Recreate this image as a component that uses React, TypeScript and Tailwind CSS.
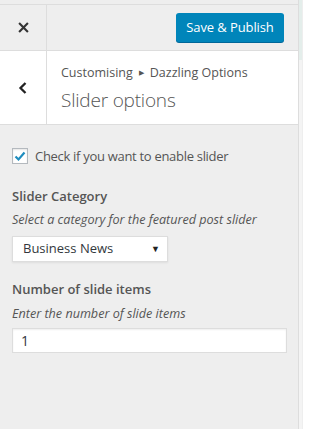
import React from 'react';

const font = { fontFamily: '"Open Sans", "Noto Sans", "Liberation Sans", sans-serif' };

export default function App() {
  return (
    <div className="flex h-[429px] w-[303px] bg-[#eee]" style={font}>
      {/* Sidebar */}
      <div className="flex w-[299px] flex-col border-r border-[#ddd] bg-[#eee]">
        {/* Top bar */}
        <div className="mt-[4px] flex h-[46px] border-t border-[#ddd]">
          <button className="flex w-[47px] items-center justify-center border-r border-[#ddd] text-[#23282d]">
            <svg width="11" height="11" viewBox="0 0 12 12">
              <path d="M2 2 L10 10 M10 2 L2 10" stroke="#333" strokeWidth="2.3" strokeLinecap="square" />
            </svg>
          </button>
          <div className="flex flex-1 items-center justify-end pr-[14px]">
            <button className="h-[29px] w-[108px] rounded-[3px] bg-[#0085ba] text-[13px] font-normal tracking-[-0.1px] text-white shadow-[0_1px_0_#006799]">
              Save &amp; Publish
            </button>
          </div>
        </div>

        {/* Section header */}
        <div className="flex h-[75px] border-y border-[#ddd] bg-white">
          <button className="flex w-[47px] items-center justify-center border-r border-[#ddd]">
            <svg width="10" height="14" viewBox="0 0 10 14">
              <path d="M7.5 2 L2.5 7 L7.5 12" fill="none" stroke="#222" strokeWidth="2.3" />
            </svg>
          </button>
          <div className="flex flex-col justify-center pl-[14px]">
            <div className="flex items-center text-[12.5px] leading-[18px] text-[#555]">
              <span>Customising</span>
              <span className="mx-[6px] text-[7px]">&#9654;</span>
              <span>Dazzling Options</span>
            </div>
            <div className="mt-[6px] text-[19px] font-light leading-[24px] tracking-[-0.2px] text-[#555]">
              Slider options
            </div>
          </div>
        </div>

        {/* Controls */}
        <div className="flex flex-col px-[12px] pt-[22px] text-[#555]">
          <label className="flex items-center">
            <span className="flex h-[16px] w-[16px] items-center justify-center border border-[#b4b9be] bg-white shadow-[inset_0_1px_2px_rgba(0,0,0,0.1)]">
              <svg width="12" height="12" viewBox="0 0 12 12">
                <path d="M1.5 6.5 L4.5 9.5 L10.5 2.5" fill="none" stroke="#1e8cbe" strokeWidth="2.2" />
              </svg>
            </span>
            <span className="ml-[7px] text-[13px] leading-[18px] tracking-[-0.3px]">Check if you want to enable slider</span>
          </label>

          <div className="mt-[21px] text-[13px] font-semibold leading-[20px]">Slider Category</div>
          <div className="mt-[5px] text-[12.6px] italic leading-[18px]">Select a category for the featured post slider</div>
          <div className="mt-[7px] flex h-[26px] w-[156px] items-center justify-between border border-[#ddd] bg-white pl-[10px] pr-[7px] text-[13px] text-[#32373c] shadow-[0_1px_2px_rgba(0,0,0,0.07)]">
            <span>Business News</span>
            <span className="text-[9px] text-[#222]">&#9660;</span>
          </div>

          <div className="mt-[17px] text-[13px] font-semibold leading-[20px]">Number of slide items</div>
          <div className="mt-[6px] text-[12.6px] italic leading-[18px]">Enter the number of slide items</div>
          <div className="mt-[5px] flex h-[25px] w-[275px] items-center border border-[#ddd] bg-white pl-[8px] text-[14px] text-[#32373c] shadow-[inset_0_1px_2px_rgba(0,0,0,0.07)]">
            1
          </div>
        </div>
      </div>
      {/* Preview edge */}
      <div className="flex w-[3px] flex-col">
        <div className="h-[60px] bg-[#e4eeeb]" />
        <div className="flex-1 bg-[#f4f4f4]" />
      </div>
    </div>
  );
}
